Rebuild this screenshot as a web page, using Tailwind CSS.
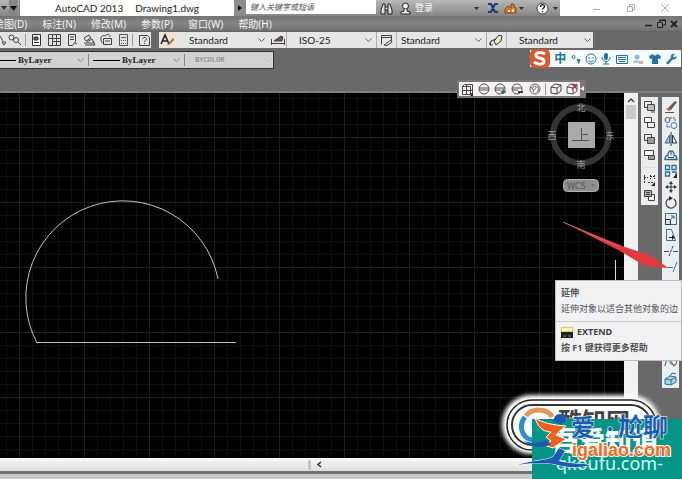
<!DOCTYPE html>
<html lang="zh-CN">
<head>
    <meta charset="UTF-8">
    <meta name="viewport" content="width=device-width, initial-scale=1.0">
    <title>AutoCAD 2013 - Drawing1.dwg</title>
    <script src="https://cdn.jsdelivr.net/npm/@tailwindcss/browser@4"></script>
</head>
<body class="relative flex flex-col h-screen overflow-hidden bg-[#696969] font-['Noto_Sans','Noto_Sans_CJK_SC',sans-serif] text-[10px] leading-4 text-[#222]">

    <!-- Title bar -->
    <header class="flex h-4 shrink-0 bg-linear-to-b from-[#b8b8b8] to-[#858585]">
        <div class="flex w-5 items-center justify-around border-r border-[#888]">
            <button aria-label="快速访问"><svg width="6" height="4"><path d="M0 0h6L3 4z" fill="#333"/></svg></button>
            <button aria-label="更多" class="bg-[#888] h-4 px-px"><svg width="7" height="5"><path d="M0 0h7L3.500 5z" fill="#111"/></svg></button>
        </div>
        <h1 class="flex flex-1 justify-center gap-3 bg-white whitespace-nowrap font-[Lato,sans-serif]">
            <span>AutoCAD 2013</span><span>Drawing1.dwg</span>
        </h1>
        <button aria-label="展开搜索" class="flex w-3 items-center justify-center bg-[#8c8c8c]"><svg width="4" height="6"><path d="M0 0v6l4-3z" fill="#111"/></svg></button>
        <input type="text" aria-label="搜索" placeholder="键入关键字或短语" class="w-[130px] h-[14px] bg-white pl-1 text-[8px] italic placeholder:text-[#555] outline-none">
        <div class="flex w-[184px] items-center text-white">
            <button aria-label="查找" class="w-5 flex justify-center"><svg width="13" height="13" fill="none" stroke="#222"><path d="M3 2h2v3h3V2h2l2 6v4H8V8H5v4H1V8z" fill="#ddd"/><path d="M5 5v3M8 5v3"/></svg></button>
            <button class="flex w-9 items-center gap-1 pl-1 text-[9px] whitespace-nowrap"><svg class="shrink-0" width="11" height="13" fill="#eee" stroke="#222"><circle cx="5.500" cy="4" r="3"/><path d="M4 7v2l-3 1v2h9v-2L7 9V7"/></svg>登录</button>
            <span class="flex-1"></span>
            <svg width="5" height="3"><path d="M0 0h5L2.500 3z" fill="#333"/></svg>
            <button aria-label="Exchange" class="ml-2"><svg width="12" height="12" fill="none"><path d="M1 2h3l4 8h3M1 10h3l4-8h3" stroke="#1d3f78" stroke-width="2"/><path d="M1 6h3M8 6h3" stroke="#9db7dd"/></svg></button>
            <button aria-label="Autodesk 360" class="ml-1"><svg width="14" height="12"><path d="M2 10V7l3-3 3 2V2h3v3l2 1v5H2z" fill="#d9782d" stroke="#8d4310"/><path d="M5 8h2v2H5zM9 7h2v3H9z" fill="#fff0dd"/></svg></button>
            <svg class="ml-0.5" width="5" height="3"><path d="M0 0h5L2.500 3z" fill="#333"/></svg>
            <button aria-label="帮助" class="ml-3"><svg width="13" height="13" fill="none"><circle cx="6.500" cy="6.500" r="5.500" fill="#f4f4f4" stroke="#32415c"/><path d="M4.500 5c0-3 4-3 4-.5 0 1.500-2 1.500-2 3M6.500 9v1.300" stroke="#222" stroke-width="1.300"/></svg></button>
            <svg class="ml-1 mr-0.5" width="5" height="3"><path d="M0 0h5L2.500 3z" fill="#333"/></svg>
        </div>
        <div class="flex w-[122px] items-center justify-between bg-white pl-8 pr-3">
            <button aria-label="最小化"><svg width="9" height="9" stroke="#aaa"><path d="M1 5.500h7"/></svg></button>
            <button aria-label="还原"><svg width="10" height="10" fill="none" stroke="#aaa"><path d="M1.500 3.500h5v5h-5zM3.500 3.500v-2h5v5h-2"/></svg></button>
            <button aria-label="关闭"><svg width="10" height="10" stroke="#aaa"><path d="M1 1l8 8M9 1L1 9"/></svg></button>
        </div>
    </header>

    <!-- Menu bar -->
    <nav class="flex h-4 shrink-0 items-center gap-[15px] overflow-hidden bg-linear-to-b from-[#747474] via-[#858585] to-[#707070] border-b border-[#646464] pr-1 text-[#f2f2f2] whitespace-nowrap">
        <button class="-ml-1.5">绘图(D)</button>
        <button>标注(N)</button>
        <button>修改(M)</button>
        <button>参数(P)</button>
        <button>窗口(W)</button>
        <button>帮助(H)</button>
        <div class="ml-auto flex items-center gap-1">
            <button aria-label="最小化图形"><svg width="8" height="9" stroke="#222" stroke-width="1.500"><path d="M0 6.500h7"/></svg></button>
            <button aria-label="还原图形"><svg width="9" height="9" fill="none" stroke="#222"><path d="M.5 3.500h5v5h-5zM2.500 3v-2h6v5h-3M2.500 1.500h6"/></svg></button>
            <button aria-label="关闭图形"><svg width="8" height="8" stroke="#222" stroke-width="1.800"><path d="M1 1l6 6M7 1L1 7"/></svg></button>
        </div>
    </nav>

    <!-- Standard + styles toolbars -->
    <div class="flex h-4 shrink-0 gap-2">
        <div class="flex w-[151px] items-center bg-[#e3e3e3] text-[#444]">
            <svg width="8" height="12" fill="none" stroke="#444"><path d="M0 2l3 5M2 8h4l-2 3z"/></svg>
            <button aria-label="缩放" class="ml-0.5"><svg width="13" height="12" fill="none" stroke="#444"><circle cx="3.500" cy="3.500" r="2.500"/><circle cx="8" cy="6" r="2.500"/><path d="M10 8l3 3"/></svg></button>
            <span class="mx-1 h-3 w-px bg-[#999]"></span>
            <button aria-label="特性" class="ml-0.5"><svg width="11" height="12" fill="none" stroke="#333"><path d="M1.500.5h8v11h-8z" fill="#fff"/><path d="M3 3h4v3H3z" fill="#2e7790"/><path d="M3 8.500h5"/></svg></button>
            <button aria-label="设计中心" class="ml-1.5"><svg width="13" height="12" fill="none" stroke="#444"><path d="M.5.5h12v11H.5zM4.500.5v11M8.500.5v11M.5 4.500h12M4.500 7.500h8"/></svg></button>
            <button aria-label="工具选项板" class="ml-1.5"><svg width="10" height="12" fill="none" stroke="#444"><path d="M1.500.5h7v7l-3 4h-4zM3 3h4M3 5.500h4M8 9l2 1"/></svg></button>
            <button aria-label="图纸集" class="ml-1.5"><svg width="13" height="12" fill="none" stroke="#444"><path d="M1 4l5-3 2 3-5 3zM1 9h10L9 5 4 8M2 11h10l-2-4"/></svg></button>
            <button aria-label="标记集" class="ml-1"><svg width="13" height="12" fill="none" stroke="#444"><path d="M1 5c-1-3 3-4 4-3 2-3 6-1 5 1M3.500 4.500h8v6h-8zM5 7h5M1 5c0 3 1 4 3 4"/></svg></button>
            <button aria-label="计算器" class="ml-1.5"><svg width="9" height="12" fill="none" stroke="#555"><path d="M.5.5h8v11h-8zM2 3.500h5M2 6.500h1m1 0h1m1 0h1M2 9.500h1m1 0h1m1 0h1"/></svg></button>
            <span class="mx-1 h-3 w-px bg-[#999]"></span>
            <button aria-label="帮助" class="ml-0.5"><svg width="12" height="12" fill="none" stroke="#444"><path d="M.5 1.500h8l2 2v8H.5zM3.500 5c0-2 4-2 4 0 0 1.500-2 1-2 3M5.500 9v1"/></svg></button>
        </div>
        <div class="flex w-[434px] items-center bg-[#e6e6e6] font-[Lato,sans-serif]">
            <button aria-label="文字样式" class="h-4 w-[18px] bg-[#f1e2d6]"><svg width="18" height="16" fill="none"><path d="M2 12L6 3l4 9M4 9h4" stroke="#222" stroke-width="1.600"/><path d="M8 13l6-7 1 2-5 5z" fill="#a06a42"/></svg></button>
            <label class="relative w-[92px]">
                <select aria-label="文字样式" class="block h-4 w-full appearance-none bg-transparent pl-3 outline-none"><option>Standard</option></select>
                <svg class="pointer-events-none absolute right-1 top-1.5" width="7" height="5" fill="none" stroke="#666"><path d="M.5.5l3 3 3-3"/></svg>
            </label>
            <button aria-label="标注样式" class="h-4 w-[18px] border-r border-[#b9a99a]"><svg width="17" height="16" fill="none" stroke="#444"><path d="M2.500 7v6M15.500 7v6M3 11.500h12"/><path d="M5 9l7-5 2 1-1 4H7z" fill="#6c5d52"/></svg></button>
            <label class="relative w-[90px] border-r border-[#aaa]">
                <select aria-label="标注样式" class="block h-4 w-full appearance-none bg-transparent pl-3 outline-none"><option>ISO-25</option></select>
                <svg class="pointer-events-none absolute right-1 top-1.5" width="7" height="5" fill="none" stroke="#666"><path d="M.5.5l3 3 3-3"/></svg>
            </label>
            <button aria-label="表格样式" class="h-4 w-5 border-r border-[#c7b9ae]"><svg width="18" height="16" fill="none" stroke="#444"><path d="M4.500 12.500v-9h10v5M4.500 5.500h10M7 13l7-5 1 2-5 3.500z"/></svg></button>
            <label class="relative w-[90px] border-r border-[#aaa]">
                <select aria-label="表格样式" class="block h-4 w-full appearance-none bg-transparent pl-1 outline-none"><option>Standard</option></select>
                <svg class="pointer-events-none absolute right-1 top-1.5" width="7" height="5" fill="none" stroke="#666"><path d="M.5.5l3 3 3-3"/></svg>
            </label>
            <button aria-label="多重引线样式" class="h-4 w-5 border-r border-[#bbb]"><svg width="19" height="16" fill="none" stroke="#333"><path d="M3 13l1-4 5-2M7 9l5-6 3 1-1 5-5 4z" fill="#efe5cf"/><path d="M3 10v3h3"/></svg></button>
            <label class="relative flex-1">
                <select aria-label="多重引线样式" class="block h-4 w-full appearance-none bg-transparent pl-3 outline-none"><option>Standard</option></select>
                <svg class="pointer-events-none absolute right-0.5 top-1.5" width="7" height="5" fill="none" stroke="#666"><path d="M.5.5l3 3 3-3"/></svg>
            </label>
        </div>
    </div>

    <!-- Properties toolbar -->
    <div class="h-[45px] shrink-0 border-b-2 border-[#808080] pt-[3px]">
        <div class="flex h-[18px] w-[274px] items-center border-y border-r border-[#333] bg-[#d2d2d2] font-['Liberation_Serif',serif] text-[9px]">
            <span class="h-px w-4 bg-black"></span>
            <label class="relative w-[72px]">
                <select aria-label="线型" class="block h-4 w-full appearance-none bg-transparent pl-0.5 font-bold outline-none"><option>ByLayer</option></select>
                <svg class="pointer-events-none absolute right-1 top-1.5" width="7" height="5" fill="none" stroke="#888"><path d="M.5.5l3 3 3-3"/></svg>
            </label>
            <span class="mr-1 h-3 w-px bg-[#888]"></span>
            <span class="h-px w-[27px] bg-black"></span>
            <label class="relative w-[62px]">
                <select aria-label="线宽" class="block h-4 w-full appearance-none bg-transparent pl-0.5 font-bold outline-none"><option>ByLayer</option></select>
                <svg class="pointer-events-none absolute right-0.5 top-1.5" width="7" height="5" fill="none" stroke="#888"><path d="M.5.5l3 3 3-3"/></svg>
            </label>
            <span class="mx-0.5 h-3 w-px bg-[#888]"></span>
            <label class="relative flex-1">
                <select aria-label="打印样式" disabled class="block h-4 w-full appearance-none bg-transparent pl-2 font-['Liberation_Mono',monospace] text-[7px] text-[#777] opacity-100 outline-none"><option>BYCOLOR</option></select>
                <svg class="pointer-events-none absolute right-0.5 top-1.5" width="7" height="5" fill="none" stroke="#bbb"><path d="M.5.5l3 3 3-3"/></svg>
            </label>
        </div>
    </div>

    <!-- Drawing area and docked palettes -->
    <main class="relative flex min-h-0 flex-1">
        <div class="flex min-w-0 flex-1 flex-col">
            <div class="flex min-h-0 flex-1">
                <div class="relative flex-1 overflow-hidden bg-black">
                    <svg class="absolute inset-0 h-full w-full" fill="none">
                        <defs>
                            <pattern id="minor" x="6" y="5" width="13" height="13" patternUnits="userSpaceOnUse"><path d="M.5 0v13M0 .5h13" stroke="#0f0f0f"/></pattern>
                            <pattern id="major" x="19" y="44" width="65" height="65" patternUnits="userSpaceOnUse"><path d="M.5 0v65M0 .5h65" stroke="#202020"/></pattern>
                        </defs>
                        <rect width="100%" height="100%" fill="url(#minor)"/>
                        <rect width="100%" height="100%" fill="url(#major)"/>
                        <path d="M37 250A97 97 0 1 1 218 186" stroke="#c4c4c4"/>
                        <path d="M37 249.500h199" stroke="#c4c4c4"/>
                    </svg>
                    <!-- ViewCube -->
                    <svg class="absolute top-1 right-2 font-['Noto_Sans_CJK_SC',sans-serif]" width="72" height="188" fill="none">
                        <circle cx="37" cy="38" r="28" stroke="#343434" stroke-width="6"/>
                        <path d="M24 25h27v26H24z" fill="#a9a9a9"/>
                        <path d="M37.500 31v12M28 43.500h17M38 37.500h6" stroke="#555"/>
                        <g fill="#9c9c9c" font-size="9" text-anchor="middle">
                            <text x="37" y="14">北</text>
                            <text x="37" y="71">南</text>
                            <text x="8" y="42">西</text>
                            <text x="66" y="42">东</text>
                        </g>
                        <rect x="19.500" y="82.500" width="35" height="12" rx="4" fill="#8e8e8e" stroke="#b0b0b0"/>
                        <text x="23" y="92" font-size="9" fill="#555">WCS</text>
                        <path d="M47 87h4l-2 3z" fill="#777"/>
                        <path d="M72 163v20" stroke="#ddd" stroke-width="2"/>
                    </svg>
                </div>
                <div class="flex w-[14px] flex-col items-center bg-[#f1f1f1] pt-1">
                    <button aria-label="向上滚动"><svg class="block" width="8" height="6" fill="none" stroke="#444" stroke-width="1.500"><path d="M1 5l3-3 3 3"/></svg></button>
                    <div class="mt-0.5 h-[14px] w-2.5 bg-[#cbcbcb]"></div>
                </div>
            </div>
            <div class="flex h-[13px] shrink-0 items-center bg-linear-to-b from-[#fafafa] to-[#dedede]">
                <span class="ml-[308px] h-2.5 w-[3px] bg-[#c4c4c4]"></span>
                <button aria-label="向左滚动" class="ml-1.5"><svg width="5" height="7" fill="none" stroke="#333" stroke-width="1.500"><path d="M4 1L1 3.500 4 6"/></svg></button>
            </div>
        </div>

        <aside class="flex w-11 items-start gap-1 pt-1 pl-[3px] text-[#444]">
            <!-- Draw order -->
            <div class="flex w-[17px] flex-col items-center bg-[#ececec] pt-0.5 pb-px">
                <button aria-label="前置" class="h-4"><svg width="13" height="14" fill="none" stroke="#444"><path d="M1.500 1.500h7v6h-7z"/><path d="M4.500 4.500h7v6h-7z" fill="#bbb"/><path d="M8 12h4"/></svg></button>
                <button aria-label="后置" class="h-4"><svg width="13" height="14" fill="none" stroke="#444"><path d="M4.500 6.500h7v5h-7z"/><path d="M1.500 1.500h7v5h-7z" fill="#f8f8f8"/></svg></button>
                <button aria-label="置于对象之上" class="h-4"><svg width="13" height="14" fill="none" stroke="#444"><path d="M1.500 2.500h7v6h-7z"/><path d="M4.500 5.500h7v6h-7z" fill="#999"/></svg></button>
                <button aria-label="置于对象之下" class="h-4"><svg width="13" height="14" fill="none" stroke="#444"><path d="M5.500 7.500h6v4h-6z" fill="#999"/><path d="M1.500 2.500h9v5h-9z" fill="#f8f8f8"/></svg></button>
                <span class="my-1 h-px w-3 bg-[#ddd]"></span>
                <button aria-label="文字前置" class="h-4"><svg width="13" height="14" fill="none" stroke="#333"><path d="M1.500 2v8M1 4.500h4M7.500 2v4M11.500 2v4M7 3.500h5M5 9.500h5" stroke-dasharray="2 1"/><path d="M12 9v4H8z" fill="#222" stroke="none"/></svg></button>
                <button aria-label="图案填充后置" class="h-4"><svg width="13" height="14" fill="none" stroke="#444"><path d="M1.500 1.500h7v6h-7z" fill="#aaa"/><path d="M3 3.500h4M3 5.500h4M5.500 7.500v4h6v-6h-3"/></svg></button>
            </div>
            <!-- Modify -->
            <div class="flex w-[17px] flex-col items-center bg-[#e9eef1] pt-0.5 pb-px">
                <button aria-label="删除" class="h-4"><svg width="14" height="14" fill="none"><path d="M4 8l7-7 2 1-6 8z" fill="#6f5b45"/><path d="M2 9l2-1 3 2-2 1z" fill="#c9584d"/><path d="M1 12.500h9" stroke="#555"/></svg></button>
                <button aria-label="复制" class="h-4"><svg width="14" height="14" fill="none"><circle cx="3.500" cy="4" r="2.500" stroke="#555"/><path d="M6 2h5v3" stroke="#555" stroke-dasharray="2 1"/><circle cx="10" cy="9.500" r="3" stroke="#3e7fa8"/><path d="M3 8v3h3" stroke="#3e7fa8"/></svg></button>
                <button aria-label="镜像" class="h-4"><svg width="14" height="14" fill="none"><path d="M5.500 3v8H1z" fill="#9ac3dc" stroke="#3e6f90"/><path d="M8.500 3v8H13z" stroke="#333"/><path d="M7 0v14" stroke="#333"/></svg></button>
                <button aria-label="偏移" class="h-4"><svg width="14" height="14" fill="none"><path d="M1 11.500h12c0-3-1-4-3-4 1-6-7-6-6 0-2 0-3 1-3 4z" stroke="#2f6482" stroke-width="1.300"/><path d="M4 9.500h6M7 4v3" stroke="#444"/></svg></button>
                <button aria-label="阵列" class="h-4"><svg width="14" height="14" fill="none" stroke="#2f6f98" stroke-width="1.300"><path d="M1.500 1.500h4v4h-4zM8 1.500h4v4H8zM1.500 8h4v4h-4zM8 8h4v4"/><path d="M13 9v5H9z" fill="#222" stroke="none"/></svg></button>
                <button aria-label="移动" class="h-4"><svg width="14" height="14"><path d="M7 1l2 3H5zM7 13l2-3H5zM1 7l3-2v4zM13 7l-3-2v4z" fill="#333"/><path d="M7 3v8M3 7h8" stroke="#333"/></svg></button>
                <button aria-label="旋转" class="h-4"><svg width="14" height="14" fill="none"><path d="M5 2.500a5 5 0 1 0 5 .5" stroke="#444" stroke-width="1.300"/><path d="M5 0l4 2-4 3z" fill="#333"/></svg></button>
                <button aria-label="缩放" class="h-4"><svg width="14" height="14" fill="none"><path d="M1.500 1.500h11v11h-11z" stroke="#2f6f98"/><path d="M1.500 7.500h5v5h-5z" fill="#cfe1ed" stroke="#333"/><path d="M7 7l3-3M7 4h3v3" stroke="#2f6f98"/></svg></button>
                <button aria-label="拉伸" class="h-4"><svg width="14" height="14" fill="none"><path d="M2.500 12.500v-11h5l4 11z" stroke="#2f6f98"/><path d="M5 9.500h4" stroke="#222"/><path d="M8 7v5l3-2.500z" fill="#222"/></svg></button>
                <button aria-label="修剪" class="h-4"><svg width="14" height="14" fill="none" stroke="#444"><path d="M0 7.500h5M9 7.500h5"/><path d="M9 2L5 12" stroke-dasharray="3 1"/></svg></button>
                <button aria-label="延伸" class="h-4"><svg width="14" height="14" fill="none" stroke="#3b7797"><path d="M3 7.500h6M13 2L9 12"/></svg></button>
                <button aria-label="打断于点" class="h-4"><svg width="14" height="14" fill="none" stroke="#444"><path d="M1.500 5v6h11V5"/></svg></button>
                <button aria-label="打断" class="h-4"><svg width="14" height="14" fill="none" stroke="#444"><path d="M1.500 11V3h4M9 3h3.500v8z"/></svg></button>
                <button aria-label="合并" class="h-4"><svg width="14" height="14" fill="none" stroke="#444"><path d="M1 7h4M9 7h4M5 4v6M9 4v6"/></svg></button>
                <button aria-label="倒角" class="h-4"><svg width="14" height="14" fill="none" stroke="#444"><path d="M1.500 2.500h6l5 5v5"/></svg></button>
                <button aria-label="圆角" class="h-4"><svg width="14" height="14" fill="none" stroke="#444"><path d="M1.500 2.500h4c5 0 7 4 7 10"/></svg></button>
                <button aria-label="光顺曲线" class="h-4"><svg width="14" height="14" fill="none"><path d="M1 10c1-8 5-8 7-3s4 3 5-3" stroke="#444"/><path d="M4 4l3 4 4 1" stroke="#3e7fa8"/></svg></button>
                <button aria-label="分解" class="h-4"><svg width="14" height="14" fill="none" stroke="#2f6f98"><path d="M1 7l5-3 6 1v5l-5 3-6-1z" fill="#a9d3e6"/><path d="M1 7l6 1 5-3M7 8v5M6 4l2-3 4 1"/></svg></button>
            </div>
        </aside>

        <!-- Pointer to the extend tool -->
        <svg class="absolute right-0 top-[125px]" width="122" height="60">
            <path d="M3 4L65 29l27 9 16 12-23-2-25-15z" fill="#df3a3d"/>
            <path d="M3 4l57 25" stroke="#b97373"/>
        </svg>

        <!-- Tooltip -->
        <div role="tooltip" class="absolute right-0 top-[187px] w-[127px] border border-[#bbb] bg-[#f1f1f4] text-[9px] leading-4 text-[#555] whitespace-nowrap">
            <div class="border-b border-[#ccc] px-[5px] pt-1 pb-1">
                <p class="font-bold">延伸</p>
                <p>延伸对象以适合其他对象的边</p>
            </div>
            <div class="px-[5px] pt-0.5 pb-1 font-bold">
                <p class="flex items-center gap-1 text-[#444]"><svg width="12" height="11"><path d="M0 0h12v5H0z" fill="#d9d35c"/><path d="M1 1h10v3H1z" fill="#f6f4c7"/><path d="M0 5h12v6H0z" fill="#222"/><path d="M2 9h3M7 9h3" stroke="#71912f"/></svg>EXTEND</p>
                <p>按 F1 键获得更多帮助</p>
            </div>
        </div>
    </main>

    <footer class="h-2 shrink-0 border-t-[3px] border-[#747474] bg-[#c9c9c9]"></footer>

    <!-- Input method bar -->
    <div class="absolute top-[50px] right-px flex h-[17px] w-[151px] items-center justify-between bg-[#f5fafc] pr-1 text-[#24729e]">
        <svg class="-my-px" width="20" height="19"><rect width="20" height="19" rx="5" fill="#d9592b"/><path d="M15 5C10 2 5 4 6 7s8 1 8 5-6 4-10 1" fill="none" stroke="#fff" stroke-width="3"/></svg>
        <button class="text-[12px] font-bold">中</button>
        <button aria-label="标点"><svg width="10" height="12" fill="currentColor"><circle cx="2.500" cy="4" r="1.500" fill="none" stroke="currentColor"/><path d="M6 6h3v3l-2 2V8H6z"/></svg></button>
        <button aria-label="表情"><svg width="12" height="12" fill="none" stroke="currentColor"><circle cx="6" cy="6" r="5"/><path d="M4 4v1.500M8 4v1.500M3.500 7c1 2.500 4 2.500 5 0"/></svg></button>
        <button aria-label="语音"><svg width="10" height="13"><rect x="3" y="1" width="4" height="7" rx="2" fill="currentColor"/><path d="M1 5c0 6 8 6 8 0M5 9v3M2 12h6" fill="none" stroke="currentColor"/></svg></button>
        <button aria-label="软键盘"><svg width="12" height="10" fill="none" stroke="currentColor"><path d="M.5 1.500h11v8H.5zM2 3.500h8M2 5.500h8M3 7.500h6"/></svg></button>
        <button aria-label="账号"><svg width="12" height="12"><circle cx="5" cy="4" r="2.500" fill="#8cbcd8"/><path d="M1 10c0-4 7-4 8 0z" fill="#a9cfe4"/><path d="M7 8h4v3H7z" fill="#e3a97c"/></svg></button>
        <button aria-label="皮肤"><svg width="12" height="12" fill="currentColor"><path d="M0 3l4-2c1 2 3 2 4 0l4 2-1 3-2-.5V11H3V5.500L1 6z"/></svg></button>
        <button aria-label="工具箱"><svg width="12" height="12"><path d="M1 10l5-5c-1-3 2-5 4-4L8 3l1 1.500L11.500 3c0 3-2 4-4 3.500L3 11.500z" fill="currentColor"/></svg></button>
    </div>

    <!-- Visual styles toolbar -->
    <div class="absolute top-[80px] right-24 flex h-[18px] w-[129px] border-2 border-[#777] bg-[#777]">
        <div class="flex flex-1 items-center justify-around bg-[#f4eff0]">
            <button aria-label="二维线框"><svg width="13" height="13" fill="none" stroke="#444"><path d="M1.500 3.500l2-2h8v8l-2 2h-8zM1.500 3.500h8v8M5.500 2v9M1.500 7.500h10"/><path d="M12 9v4H9z" fill="#222" stroke="none"/></svg></button>
            <button aria-label="线框"><svg width="12" height="12" fill="none" stroke="#555"><circle cx="6" cy="6" r="5"/><path d="M1 5h10M1 7h10"/></svg></button>
            <button aria-label="隐藏"><svg width="13" height="12" fill="none" stroke="#555"><circle cx="6" cy="6" r="5"/><path d="M1 5h10M1 7h6"/><path d="M9 6v5M7 9h5" stroke="#276b35" stroke-width="1.500"/></svg></button>
            <button aria-label="真实"><svg width="13" height="12" fill="none" stroke="#555"><circle cx="6" cy="6" r="5"/><path d="M1 5h10M1 7h6"/><path d="M7 9h5" stroke="#333" stroke-width="1.800"/></svg></button>
            <button aria-label="概念"><svg width="12" height="12" fill="none" stroke="#666"><circle cx="6" cy="6" r="5"/><path d="M4 5c0-3 4-2 3 0s-4 2-2 4M8 3l2 3-2 3M2 4l3 4"/></svg></button>
            <span class="h-3 w-px bg-[#999]"></span>
            <button aria-label="着色"><svg width="12" height="12" fill="none" stroke="#444"><path d="M1 4l4-3 6 1v6l-4 3-6-1zM1 4l6 1 4-3M7 5v6"/></svg></button>
            <button aria-label="取消"><svg width="12" height="12" fill="none" stroke="#555"><path d="M1 4l4-3 6 1v6l-4 3-6-1zM1 4l6 1 4-3M7 5v6"/><path d="M6 1l5 5M11 1L6 6" stroke="#b22a3a" stroke-width="1.300"/></svg></button>
        </div>
        <button aria-label="关闭工具栏" class="flex w-1 pt-1"><svg width="4" height="5"><path d="M4 0v5L0 2.500z" fill="#eee"/></svg></button>
    </div>

    <!-- Site badges -->
    <svg class="absolute right-0 bottom-0 font-['Noto_Sans_CJK_SC',sans-serif]" width="184" height="96" fill="none">
        <defs><filter id="glow" x="-20%" y="-30%" width="140%" height="160%"><feGaussianBlur stdDeviation="2"/></filter></defs>
        <rect x="4" y="12" width="158" height="59" rx="29" fill="#fff" filter="url(#glow)"/>
        <rect x="7" y="15" width="152" height="53" rx="26" fill="#fff"/>
        <rect x="9" y="17" width="149" height="50" rx="25" stroke="#222" stroke-width="1.500"/>
        <rect x="14" y="22" width="139" height="40" rx="20" stroke="#333" stroke-width="2"/>
        <path d="M28 33c5-8 22-8 26 1" stroke="#e59556" stroke-width="5"/>
        <path d="M27 34c-7 9-3 22 8 23" stroke="#2d8ed6" stroke-width="5"/>
        <text x="60" y="47" font-size="24" font-weight="bold" fill="#444">酷知网</text>
        <path d="M34 36h150v60H34z" fill="#049587"/>
        <text x="53" y="68" font-size="27" font-weight="900" fill="#fff">吾爱知道</text>
        <text x="58" y="87" font-family="Noto Sans" font-size="18" fill="#c9fff4">qkoufu.com-</text>
        <g stroke="#fff" stroke-width="2" paint-order="stroke">
            <g fill="#1c5cb0" font-weight="bold" stroke-width="1">
                <text x="73" y="53" font-size="24">爱</text>
                <text x="104" y="52" font-size="16">·</text>
                <text x="120" y="53" font-size="25">尬聊</text>
            </g>
            <text x="74" y="73" font-family="Liberation Sans" font-size="18" font-weight="bold" fill="#f26a1b">igaliao.com</text>
        </g>
        <ellipse cx="62" cy="36" rx="6" ry="5" fill="#1c5cb0"/>
        <path d="M37 35c8 5 18 7 31 8-5 4-8 6-10 9l10 4-13 9-9-3 7-4-5-4 5-5c-8 0-13-5-16-14z" fill="#f0601c" stroke="#fff"/>
        <path d="M24 57c8 4 17 3 24 0l5 4c-8 5-19 4-29-4z" fill="#1c5cb0"/>
        <path d="M19 82c16-5 28-4 36-8l6-9 6 3-6 10c10 3 22 2 32 4-14 4-27 2-37-1-13-2-25-1-37 1z" fill="#1c5cb0" stroke="#fff" stroke-width="1" paint-order="stroke"/>
    </svg>
</body>
</html>
